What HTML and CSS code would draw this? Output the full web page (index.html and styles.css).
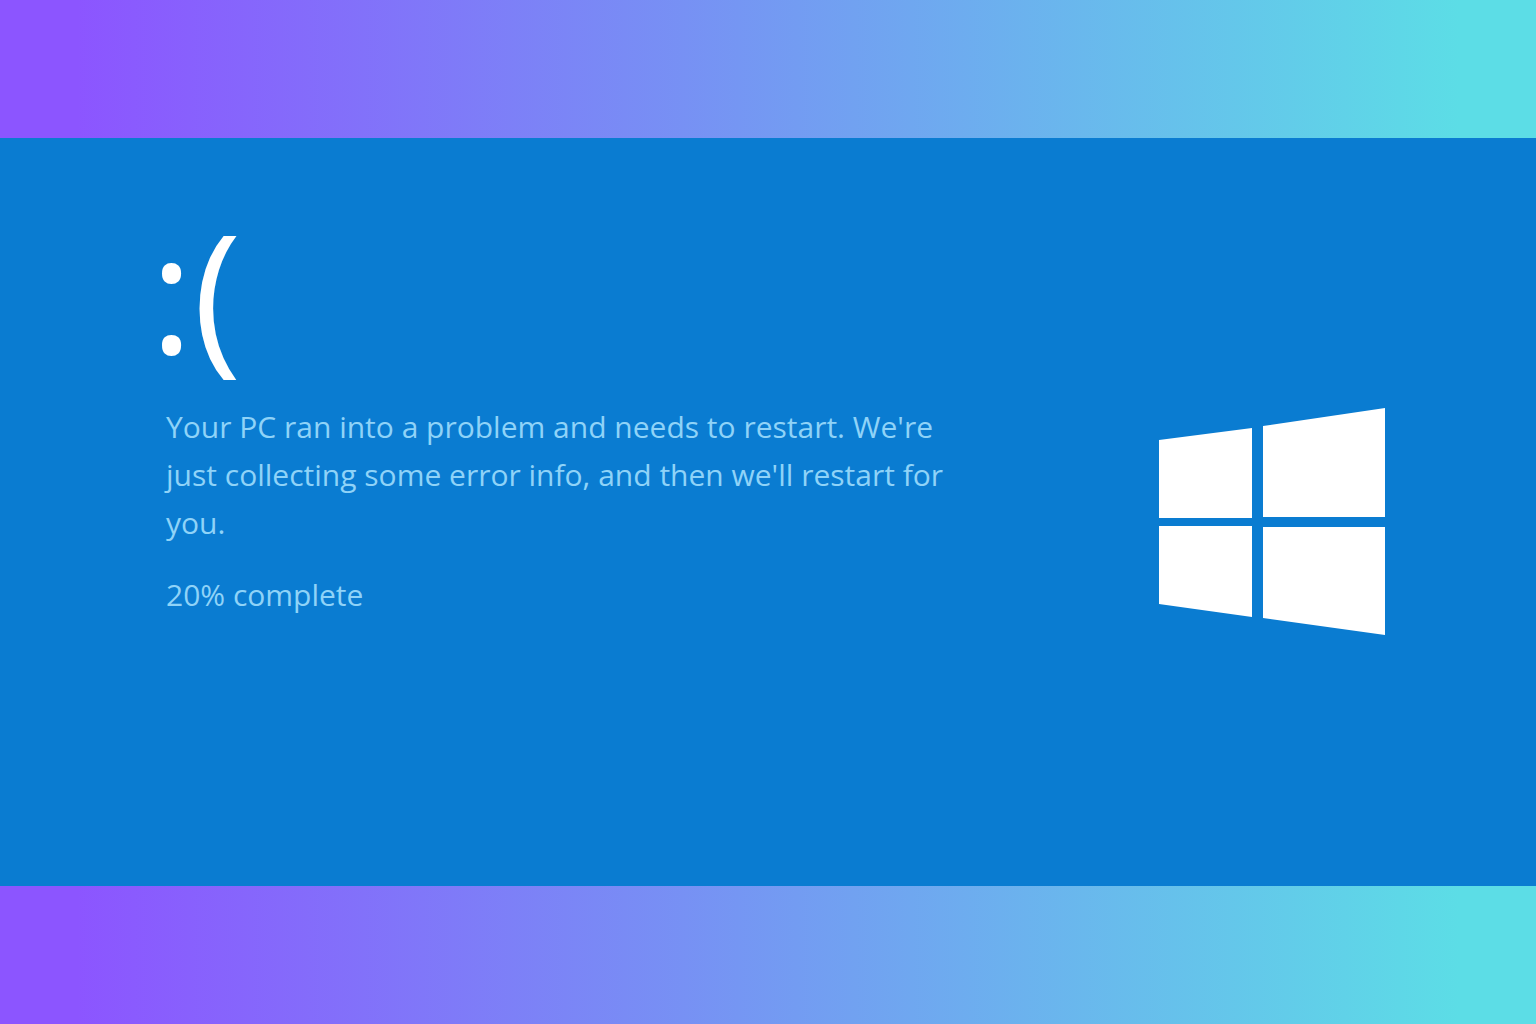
FILE: index.html
```html
<!DOCTYPE html>
<html lang="en">
<head>
    <meta charset="UTF-8">
    <meta name="viewport" content="width=device-width, initial-scale=1.0">
    <title>Your PC ran into a problem</title>
    <link rel="stylesheet" href="styles.css">
</head>
<body>
    <main class="screen">
        <section class="message">
            <p class="face">:(</p>
            <h1 class="error-text">Your PC ran into a problem and needs to restart. We're just collecting some error info, and then we'll restart for you.</h1>
            <p class="progress">20% complete</p>
        </section>

        <!-- Windows logo -->
        <svg class="logo" viewBox="0 0 226 228" role="img" aria-label="Windows">
            <path d="M0 32L93 20V110H0Z" />
            <path d="M104 18L226 0V109H104Z" />
            <path d="M0 118H93V209L0 196Z" />
            <path d="M104 119H226V227L104 210Z" />
        </svg>
    </main>
</body>
</html>
```
FILE: styles.css
```css
* {
    margin: 0;
    padding: 0;
    box-sizing: border-box;
}

body {
    min-height: 100vh;
    display: flex;
    flex-direction: column;
    justify-content: center;
    font-family: "Open Sans", "Noto Sans", sans-serif;
    background: linear-gradient(to right, #8c55ff 5%, #5cdde6 95%);
}

/* Blue error screen */
.screen {
    min-height: 73vh;
    display: flex;
    justify-content: space-between;
    align-items: center;
    padding: 0 151px 0 150px;
    background-color: #0a7cd1;
}

.message {
    max-width: 800px;
    padding-bottom: 170px;
}

/* Sad face */
.face {
    margin-bottom: 56px;
    font-size: 164px;
    font-weight: 400;
    line-height: 112px;
    color: #fff;
}

.error-text,
.progress {
    padding-left: 16px;
    font-size: 30px;
    font-weight: 400;
    line-height: 48px;
    color: #8fd3f8;
}

.progress {
    margin-top: 24px;
}

/* Windows logo */
.logo {
    flex: none;
    width: 226px;
    height: 228px;
    margin-top: 20px;
    fill: #fff;
}
```
